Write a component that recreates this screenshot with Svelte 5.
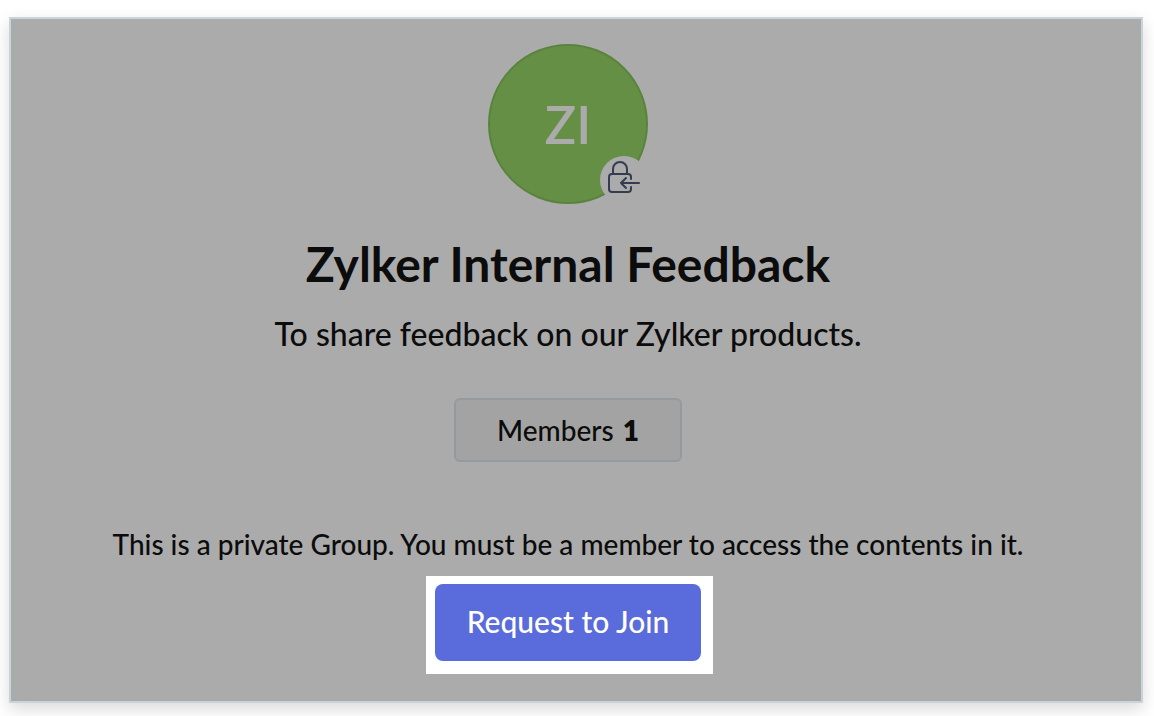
<script lang="ts">
    let group = {
        initials: "ZI",
        name: "Zylker Internal Feedback",
        description: "To share feedback on our Zylker products.",
        members: 1
    }
</script>

<main>
    <div class="avatar">
        <span>{group.initials}</span>
        <div class="badge">
            <svg viewBox="0 0 48 48" width="48" height="48" fill="none" stroke="#333c50" stroke-width="2" stroke-linecap="round" stroke-linejoin="round">
                <path d="M13 17v-4a7 7 0 0 1 14 0v4" />
                <path d="M31 23v-2a3 3 0 0 0-3-3H12a3 3 0 0 0-3 3v12a3 3 0 0 0 3 3h16a3 3 0 0 0 3-3v-2" />
                <path d="M39 27H21m5-5-5 5 5 5" />
            </svg>
        </div>
    </div>
    <h1>{group.name}</h1>
    <p class="description">{group.description}</p>
    <button class="members" type="button">Members <b>{group.members}</b></button>
    <p class="notice">This is a private Group. You must be a member to access the contents in it.</p>
    <div class="spotlight">
        <button class="join" type="button">Request to Join</button>
    </div>
</main>

<style>
    :global(body) {
        background: #fff;
    }
    main {
        display: flex;
        flex-direction: column;
        align-items: center;
        box-sizing: border-box;
        margin: 17px 11px 13px 9px;
        padding: 25px 32px 27px 16px;
        border: 2px solid #c8d4db;
        background: #ababab;
        box-shadow: 0 6px 16px rgba(0, 0, 0, 0.15);
        color: #0c0c0c;
        font-family: Lato, sans-serif;
        text-align: center;
    }
    .avatar {
        position: relative;
        display: flex;
        align-items: center;
        justify-content: center;
        box-sizing: border-box;
        width: 160px;
        height: 160px;
        border: 2px solid #5a833d;
        border-radius: 50%;
        background: #658f45;
        color: #ababab;
        font-size: 52px;
        font-weight: 600;
    }
    /* sits over the lower right edge of the avatar */
    .badge {
        position: absolute;
        right: -2px;
        bottom: -2px;
        width: 48px;
        height: 48px;
        border-radius: 50%;
        background: #ababab;
    }
    .badge svg {
        display: block;
    }
    h1 {
        margin: 30px 0 0;
        font-size: 48px;
        font-weight: 700;
        line-height: 60px;
    }
    p {
        margin: 0;
        font-weight: 500;
    }
    .description {
        margin-top: 20px;
        font-size: 32px;
        line-height: 40px;
    }
    button {
        font-family: inherit;
        cursor: pointer;
    }
    .members {
        margin-top: 44px;
        padding: 0 41px;
        height: 64px;
        border: 2px solid #959a9e;
        border-radius: 6px;
        background: #a3a3a3;
        color: inherit;
        font-size: 28px;
        font-weight: 500;
    }
    .members b {
        margin-left: 2px;
        font-weight: 800;
    }
    .notice {
        margin-top: 64px;
        font-size: 28px;
        line-height: 36px;
    }
    .spotlight {
        margin: 14px 0 0 3px;
        padding: 8px 12px 13px 9px;
        background: #fff;
    }
    .join {
        display: block;
        height: 77px;
        padding: 0 32px 4px;
        border: 0;
        border-radius: 8px;
        background: #5a6bdb;
        color: #fff;
        font-size: 30px;
        font-weight: 500;
    }
</style>
